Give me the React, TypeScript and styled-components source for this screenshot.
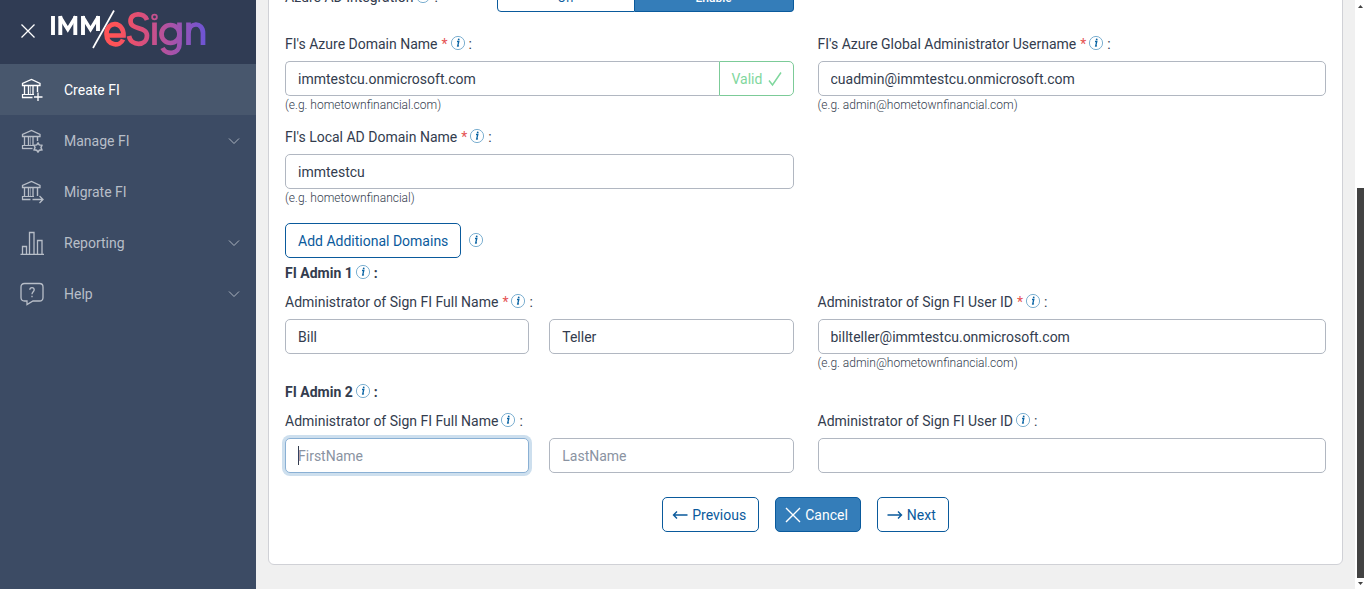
import React, { useId } from "react";
import styled, { createGlobalStyle, css } from "styled-components";

const GlobalStyle = createGlobalStyle`
  *, *::before, *::after { box-sizing: border-box; }
  body { margin: 0; background: #f0f0f0; overflow: hidden; }
  body, button, input {
    font-family: Roboto, "Liberation Sans", sans-serif;
    font-size: 14px;
    line-height: 20px;
    color: #333c4e;
  }
`;

const Shell = styled.div`
  display: grid;
  grid-template-columns: 256px minmax(0, 1fr) 11px;
  height: 100vh;
`;

/* Sidebar */
const Sidebar = styled.aside`
  background: #3c4b64;
`;
const Brand = styled.header`
  display: flex;
  align-items: center;
  gap: 14px;
  height: 64px;
  padding: 0 20px 2px;
  background: #303c54;
`;
const CloseButton = styled.button`
  display: flex;
  padding: 0;
  border: 0;
  background: none;
  color: #fff;
`;
const NavList = styled.ul`
  list-style: none;
  margin: 0;
  padding: 0;
`;
const NavLink = styled.a<{ $active?: boolean }>`
  display: flex;
  align-items: center;
  gap: 20px;
  height: 51px;
  padding: 0 16px 0 20px;
  color: ${(p) => (p.$active ? "#fff" : "#b8bec8")};
  background: ${(p) => (p.$active ? "#48576d" : "transparent")};
  text-decoration: none;
`;
const NavText = styled.span`
  flex: 1;
`;

/* Form */
const Main = styled.main`
  overflow: hidden;
  padding: 0 12px 24px;
`;
const Card = styled.form`
  margin-top: -33px;
  padding: 16px 16px 32px;
  background: #fff;
  border: 1px solid #d0d1d6;
  border-radius: 6px;
`;
const Row = styled.div<{ $space?: number }>`
  display: grid;
  grid-template-columns: minmax(0, 1fr) minmax(0, 1fr);
  column-gap: 24px;
  margin-bottom: ${(p) => p.$space ?? 0}px;
`;
const ToggleRow = styled.div`
  display: grid;
  grid-template-columns: 5fr 7fr;
`;
const ToggleLabel = styled.span`
  display: flex;
  align-items: center;
  height: 26px;
`;
const Toggle = styled.div`
  display: grid;
  grid-template-columns: 138px 1fr;
`;
const ToggleButton = styled.button<{ $on?: boolean }>`
  height: 28px;
  padding: 0;
  font-size: 12px;
  border: 1px solid #0a5a9c;
  border-radius: ${(p) => (p.$on ? "0 4px 4px 0" : "4px 0 0 4px")};
  border-left-width: ${(p) => (p.$on ? 0 : 1)}px;
  font-weight: ${(p) => (p.$on ? 500 : 400)};
  color: ${(p) => (p.$on ? "#fff" : "#0a5a9c")};
  background: ${(p) => (p.$on ? "#347db9" : "#fff")};
`;
const Field = styled.div`
  display: flex;
  flex-direction: column;
`;
const LabelLine = styled.div`
  display: flex;
  align-items: center;
  height: 20px;
  margin-bottom: 7px;
`;
const Heading = styled.h3`
  display: flex;
  align-items: center;
  height: 20px;
  margin: 0 0 9px;
  font-size: 14px;
  font-weight: 700;
`;
const Star = styled.span`
  margin-left: 4px;
  color: #e55353;
`;
const Colon = styled.span`
  margin-left: 3px;
`;
const InfoButton = styled.button`
  display: flex;
  margin-left: 2px;
  padding: 0 0 2px;
  border: 0;
  background: none;
`;
const inputBox = css`
  width: 100%;
  height: 35px;
  padding: 0 12px;
  background: #fff;
  border: 1px solid #b1b7c1;
  border-radius: 5px;
`;
const Input = styled.input<{ $joined?: boolean }>`
  ${inputBox}
  ${(p) => p.$joined && "border-right: 0; border-radius: 5px 0 0 5px;"}
  &::placeholder { color: #8a93a2; opacity: 1; }
  &:focus {
    outline: 0;
    border-color: #8ab0d4;
    box-shadow: 0 0 0 3px #cddfee;
  }
  &:focus:placeholder-shown {
    caret-color: transparent;
    background: linear-gradient(#333c4e, #333c4e) 12px center / 1px 19px no-repeat #fff;
  }
`;
const InputGroup = styled.div`
  display: flex;
`;
const ValidMark = styled.span`
  display: flex;
  align-items: center;
  gap: 6px;
  flex: none;
  width: 75px;
  padding-left: 12px;
  color: #7fd79d;
  border: 1px solid #7ccb98;
  border-radius: 0 5px 5px 0;
`;
const NamePair = styled.div`
  display: grid;
  grid-template-columns: 1fr 1fr;
  gap: 20px;
`;
const Hint = styled.small`
  height: 17px;
  font-size: 12px;
  line-height: 19px;
  font-weight: 300;
`;
const Button = styled.button<{ $primary?: boolean }>`
  display: flex;
  align-items: center;
  gap: 4px;
  height: 35px;
  padding: 0 12px 0 9px;
  border: 1px solid #0a5a9c;
  border-radius: 5px;
  color: ${(p) => (p.$primary ? "#fff" : "#0a5a9c")};
  background: ${(p) => (p.$primary ? "#347db9" : "#fff")};
`;
const AddButton = styled(Button)`
  padding: 0 12px;
`;
const AddLine = styled.div`
  display: flex;
  align-items: center;
  gap: 5px;
  margin-bottom: 5px;
`;
const Actions = styled.div`
  display: flex;
  justify-content: center;
  gap: 16px;
  margin-top: 24px;
`;

/* Page scrollbar */
const ScrollTrack = styled.div`
  display: flex;
  flex-direction: column;
  align-items: center;
  background: #fff;
  padding: 4px 2px 3px;
`;
const ScrollThumb = styled.div`
  width: 7px;
  height: 67%;
  margin: auto 0 4px;
  background: #424242;
`;

const Icon = ({ size = 24, children }: { size?: number; children: React.ReactNode }) => (
  <svg width={size} height={size} viewBox={`0 0 ${size} ${size}`} fill="none" stroke="currentColor" aria-hidden="true">
    {children}
  </svg>
);

const Bank = () => (
  <>
    <path d="M2.500 7.500V5.500L11.500 1.500L20 5.500V7.500Z" strokeWidth="1.300" />
    <path d="M4.500 8V16M8.500 8V16M13 8V16" strokeWidth="1.300" />
    <path d="M10.500 8V16" strokeWidth="0.500" />
    <path d="M2.500 20V16.500H14" strokeWidth="1.200" />
  </>
);
const CreateIcon = () => (
  <Icon><Bank /><path d="M17.500 8V14" strokeWidth="1.400" /><path d="M2 19.500H12.500M18 14.500V23M14 19H22.500" strokeWidth="1.300" /></Icon>
);
const ManageIcon = () => (
  <Icon><Bank /><path d="M17.500 8V12" strokeWidth="1.400" /><path d="M2 19.500H12.500" strokeWidth="1.300" />
    <path d="M18 14L19.300 15.900L21.900 16.300L21 18.500L21.900 20.800L19.300 21.200L18 23L16.700 21.200L14.100 20.800L15 18.500L14.100 16.300L16.700 15.900Z" strokeWidth="1.500" />
  </Icon>
);
const MigrateIcon = () => (
  <Icon><Bank /><path d="M17.500 8V16" strokeWidth="1.400" /><path d="M2 19.500H10.500M12.500 19.500H23M19.500 16L23 19.500L19.500 23" strokeWidth="1.300" /></Icon>
);
const ReportIcon = () => (
  <Icon><path d="M0.500 23.500H24M2.500 23V15.500H6.500V23M9.500 23V1.500H14V23M17.500 23V9.500H22V23" strokeWidth="1.300" /></Icon>
);
const HelpIcon = () => (
  <Icon>
    <path d="M4.500 1.500H19.500Q23 1.500 23 5V15.500Q23 19 19.500 19H13L7 22.500V19H4.500Q1 19 1 15.500V5Q1 1.500 4.500 1.500Z" strokeWidth="1.300" />
    <path d="M9.800 7.800C9.800 4.800 14.200 4.800 14.200 7.800C14.200 9.800 12 9.800 12 12.300M12 13.700V15.200" strokeWidth="1.300" />
  </Icon>
);
const Chevron = () => (
  <svg width="12" height="12" viewBox="0 0 12 12" fill="none" stroke="currentColor" aria-hidden="true">
    <path d="M1 3.500L6 8.500L11 3.500" strokeWidth="0.900" />
  </svg>
);

const Logo = () => (
  <svg width="158" height="50" viewBox="0 0 158 50" role="img" aria-label="IMM eSign">
    <defs>
      <linearGradient id="brand" gradientUnits="userSpaceOnUse" x1="55" y1="0" x2="156" y2="0">
        <stop offset="0.100" stopColor="#ff5357" />
        <stop offset="0.350" stopColor="#dd4f78" />
        <stop offset="0.680" stopColor="#a653ab" />
        <stop offset="1" stopColor="#6c55d5" />
      </linearGradient>
    </defs>
    <g fill="none" stroke="#fff" strokeWidth="3.900">
      <path d="M3 10V29M10.300 29V10M25.300 29V10M33 29V10M48 25V10" />
      <path d="M9.800 10.500L17.800 23.500L25.800 10.500M32.500 10.500L40.500 23.500L48.500 10.500" strokeWidth="3.500" />
      <path d="M64 4.500L43 42" strokeWidth="1.700" />
    </g>
    <g fill="none" stroke="url(#brand)" strokeWidth="4.700">
      <path d="M56 29.500H73.500C74 15 56.500 14 56.500 28C56.500 40 70 41 73 33.500" />
      <path d="M97 14C94.500 6 80.500 6.500 80.500 15C80.500 24.500 97 20 97 29.500C97 40.500 81 40.500 79 30" />
      <path d="M104.500 16.500V39" />
      <circle cx="104.500" cy="11" r="0.900" />
      <circle cx="120.500" cy="28" r="9" />
      <path d="M129.500 16.500V38C129.500 49 116 49 112.500 42" />
      <path d="M138.500 39V16.500M138.500 28C138.500 15.500 153 15.500 153 27V39" />
    </g>
  </svg>
);

const Info = () => (
  <InfoButton type="button" aria-label="More information">
    <svg width="16" height="16" viewBox="0 0 16 16" aria-hidden="true">
      <circle cx="8" cy="8" r="6.600" fill="none" stroke="#5b9bc4" strokeWidth="0.800" />
      <path d="M7 6.500H8.800L7.700 11L9 10.800" fill="none" stroke="#0a64a4" strokeWidth="1.300" />
      <circle cx="8.700" cy="4.400" r="0.900" fill="#0a64a4" />
    </svg>
  </InfoButton>
);

const FieldLabel = ({ id, text, required }: { id: string; text: string; required?: boolean }) => (
  <LabelLine>
    <label htmlFor={id}>{text}</label>
    {required && <Star>*</Star>}
    <Info />
    <Colon>:</Colon>
  </LabelLine>
);

type TextFieldProps = { label: string; required?: boolean; value?: string; hint?: string; valid?: boolean };
const TextField = ({ label, required, value, hint, valid }: TextFieldProps) => {
  const id = useId();
  return (
    <Field>
      <FieldLabel id={id} text={label} required={required} />
      <InputGroup>
        <Input id={id} defaultValue={value} $joined={valid} />
        {valid && (
          <ValidMark>
            Valid
            <svg width="14" height="16" viewBox="0 0 14 16" fill="none" stroke="currentColor" strokeWidth="1.500" aria-hidden="true">
              <path d="M1 9.500L4.500 14L13 1.500" />
            </svg>
          </ValidMark>
        )}
      </InputGroup>
      {hint && <Hint>{hint}</Hint>}
    </Field>
  );
};

type NameFieldProps = { required?: boolean; first?: string; last?: string; focused?: boolean };
const NameField = ({ required, first, last, focused }: NameFieldProps) => {
  const id = useId();
  return (
    <Field>
      <FieldLabel id={id} text="Administrator of Sign FI Full Name" required={required} />
      <NamePair>
        <Input id={id} defaultValue={first} placeholder="FirstName" autoFocus={focused} />
        <Input aria-label="Last name" defaultValue={last} placeholder="LastName" />
      </NamePair>
    </Field>
  );
};

const navItems = [
  { text: "Create FI", icon: <CreateIcon />, active: true },
  { text: "Manage FI", icon: <ManageIcon />, menu: true },
  { text: "Migrate FI", icon: <MigrateIcon /> },
  { text: "Reporting", icon: <ReportIcon />, menu: true },
  { text: "Help", icon: <HelpIcon />, menu: true },
];

export default function App() {
  return (
    <Shell>
      <GlobalStyle />
      <Sidebar>
        <Brand>
          <CloseButton type="button" aria-label="Close menu">
            <Icon size={16}><path d="M1.500 1.500L14.500 14.500M14.500 1.500L1.500 14.500" strokeWidth="1.300" /></Icon>
          </CloseButton>
          <Logo />
        </Brand>
        <nav>
          <NavList>
            {navItems.map((item) => (
              <li key={item.text}>
                <NavLink href="#" $active={item.active}>
                  {item.icon}
                  <NavText>{item.text}</NavText>
                  {item.menu && <Chevron />}
                </NavLink>
              </li>
            ))}
          </NavList>
        </nav>
      </Sidebar>
      <Main>
        <Card>
          <Row $space={22}>
            <ToggleRow>
              <ToggleLabel>Azure AD Integration<Info /><Colon>:</Colon></ToggleLabel>
              <Toggle role="group" aria-label="Azure AD Integration">
                <ToggleButton type="button">Off</ToggleButton>
                <ToggleButton type="button" $on>Enable</ToggleButton>
              </Toggle>
            </ToggleRow>
          </Row>
          <Row $space={14}>
            <TextField label="FI's Azure Domain Name" required valid value="immtestcu.onmicrosoft.com" hint="(e.g. hometownfinancial.com)" />
            <TextField label="FI's Azure Global Administrator Username" required value="cuadmin@immtestcu.onmicrosoft.com" hint="(e.g. admin@hometownfinancial.com)" />
          </Row>
          <Row $space={17}>
            <TextField label="FI's Local AD Domain Name" required value="immtestcu" hint="(e.g. hometownfinancial)" />
          </Row>
          <AddLine>
            <AddButton type="button">Add Additional Domains</AddButton>
            <Info />
          </AddLine>
          <Heading>FI Admin 1<Info /><Colon>:</Colon></Heading>
          <Row $space={11}>
            <NameField required first="Bill" last="Teller" />
            <TextField label="Administrator of Sign FI User ID" required value="billteller@immtestcu.onmicrosoft.com" hint="(e.g. admin@hometownfinancial.com)" />
          </Row>
          <Heading>FI Admin 2<Info /><Colon>:</Colon></Heading>
          <Row>
            <NameField focused />
            <TextField label="Administrator of Sign FI User ID" />
          </Row>
          <Actions>
            <Button type="button">
              <Icon size={16}><path d="M15.500 8H1.500M5 4.500L1.500 8L5 11.500" strokeWidth="1.400" /></Icon>
              Previous
            </Button>
            <Button type="button" $primary>
              <Icon size={16}><path d="M1 1L15 15M15 1L1 15" strokeWidth="1.400" /></Icon>
              Cancel
            </Button>
            <Button type="button">
              <Icon size={16}><path d="M0.500 8H14.500M11 4.500L14.500 8L11 11.500" strokeWidth="1.400" /></Icon>
              Next
            </Button>
          </Actions>
        </Card>
      </Main>
      <ScrollTrack aria-hidden="true">
        <svg width="7" height="4" viewBox="0 0 7 4"><path d="M1 4L3.500 1L6 4Z" fill="#424242" /></svg>
        <ScrollThumb />
        <svg width="7" height="4" viewBox="0 0 7 4"><path d="M1 0L3.500 3L6 0Z" fill="#424242" /></svg>
      </ScrollTrack>
    </Shell>
  );
}
